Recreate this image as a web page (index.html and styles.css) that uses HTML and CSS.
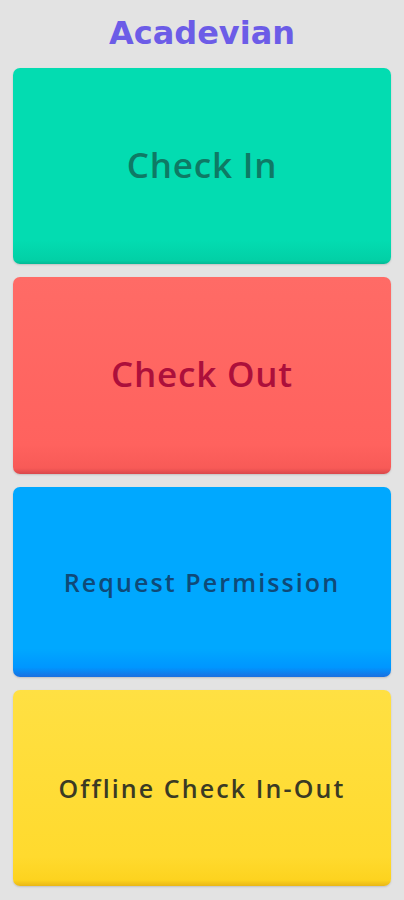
FILE: index.html
```html
<!DOCTYPE html>
<html lang="en">

<head>
    <meta charset="UTF-8">
    <meta name="viewport" content="width=device-width, initial-scale=1.0">
    <title>Acadevian</title>
    <link rel="stylesheet" href="styles.css">
</head>

<body>
    <h1 class="brand">Acadevian</h1>

    <div class="actions">
        <button class="action action-in">Check In</button>
        <button class="action action-out">Check Out</button>
        <button class="action action-request small">Request Permission</button>
        <button class="action action-offline small">Offline Check In-Out</button>
    </div>
</body>

</html>
```

FILE: styles.css
```css
/* Reset default margin and padding */
* {
    margin: 0;
    padding: 0;
    box-sizing: border-box;
}

body {
    font-family: 'Open Sans', sans-serif;
    background-color: #e3e3e3;
    width: 404px;
    height: 900px;
    padding: 13px 13px 0;
    display: flex;
    flex-direction: column;
}

/* App title */
.brand {
    color: #6c5ce7;
    text-align: center;
    font-family: 'DejaVu Sans', sans-serif;
    font-size: 32px;
    font-weight: bold;
    line-height: 40px;
    margin-bottom: 15px;
}

/* Card buttons */
.actions {
    display: flex;
    flex-direction: column;
    gap: 13px;
}

.action {
    height: 196px;
    width: 100%;
    border: none;
    border-radius: 7px;
    font-family: 'Open Sans', sans-serif;
    font-size: 35px;
    font-weight: 600;
    letter-spacing: 0.8px;
    padding-bottom: 4px;
    cursor: pointer;
    box-shadow: 0 1px 2px rgba(0, 0, 0, 0.15);
}

.action.small {
    font-size: 25px;
    letter-spacing: 2.1px;
    padding-bottom: 0;
}

.action-in {
    background: linear-gradient(to bottom, #03dcb1 88%, #02d0a6 98%, #02b995);
    color: #0e7a65;
}

.action-out {
    height: 197px;
    background: linear-gradient(to bottom, #ff6b66 0%, #ff625e 85%, #f85a57 97%, #d9474a);
    color: #ad0f3b;
}

.action-request {
    height: 190px;
    background: linear-gradient(to bottom, #00a8ff 85%, #0096ff 95%, #1a6fe0);
    color: #0f4a78;
}

.action-offline {
    background: linear-gradient(to bottom, #ffe043 0%, #ffda2e 85%, #fdd31f 97%, #e9b716);
    color: #3a3a24;
}
```
